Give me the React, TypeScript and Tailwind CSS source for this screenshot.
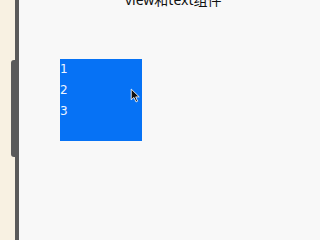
export default function App() {
  return (
    <div className="flex h-screen w-full overflow-hidden bg-[#f8f8f8]">
      <div className="w-[11px] shrink-0 bg-[#f8f1e2]" />
      <div className="flex w-[4px] shrink-0 flex-col bg-[#f8f1e2]">
        <div className="mt-[60px] h-[97px] rounded-l-[3px] bg-[#5a5a5a]" />
      </div>
      <div className="w-[4px] shrink-0 bg-[#5a5a5a]" />
      <div className="relative flex flex-1 flex-col font-['Noto_Sans','Noto_Sans_CJK_SC',sans-serif]">
        <div className="-mt-[10px] pl-[106px] text-[14px] leading-[20px] text-[#111]">
          view和text组件
        </div>
        <div className="mt-[49px] ml-[41px] flex h-[82px] w-[82px] flex-col bg-[#0672f5] font-['DejaVu_Sans',sans-serif] text-[12px] leading-[21px] text-[#eef4ff]">
          <span>1</span>
          <span>2</span>
          <span>3</span>
        </div>
        <svg
          className="absolute left-[111px] top-[88px]"
          width="11"
          height="15"
          viewBox="0 0 10 14"
        >
          <path
            d="M1 1 L1 11 L3.5 8.8 L5.5 13 L7 12.3 L5.2 8.3 L8.5 8.3 Z"
            fill="#111"
            stroke="#fff"
            strokeWidth="0.8"
            strokeLinejoin="round"
          />
        </svg>
      </div>
    </div>
  );
}
